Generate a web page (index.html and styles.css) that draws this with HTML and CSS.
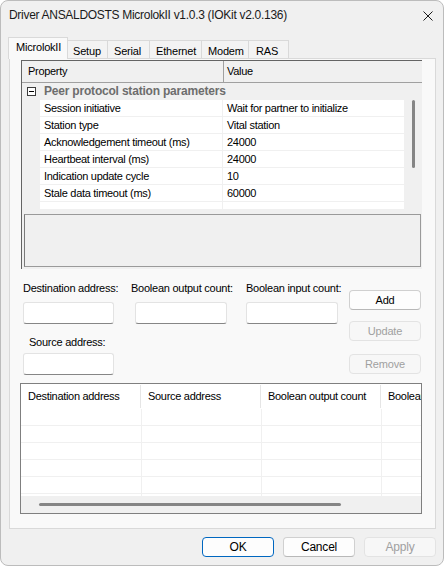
FILE: index.html
```html
<!DOCTYPE html>
<html>
<head>
<meta charset="utf-8">
<link rel="stylesheet" href="styles.css">
</head>
<body>
<div class="window">
  <div class="titlebar">
    <span class="title">Driver ANSALDOSTS MicrolokII v1.0.3 (IOKit v2.0.136)</span>
    <svg class="close" width="10" height="10" viewBox="0 0 10 10"><path d="M0.5 0.5 L9.5 9.5 M9.5 0.5 L0.5 9.5" stroke="#1b1b1b" stroke-width="1" fill="none"/></svg>
  </div>
  <div class="client">
    <div class="tabs">
      <div class="tab active">MicrolokII</div>
      <div class="tab t-setup">Setup</div>
      <div class="tab t-serial">Serial</div>
      <div class="tab t-eth">Ethernet</div>
      <div class="tab t-modem">Modem</div>
      <div class="tab t-ras">RAS</div>
    </div>
    <div class="panel">
      <div class="pg">
        <div class="pg-head">
          <div class="ph-prop">Property</div>
          <div class="ph-val">Value</div>
        </div>
        <div class="pg-body">
          <div class="pg-rows">
            <div class="cat">
              <svg class="minus" width="9" height="9" viewBox="0 0 9 9"><rect x="0.5" y="0.5" width="8" height="8" fill="#fff" stroke="#3c3c3c"/><path d="M2 4.5 H7" stroke="#000" stroke-width="1"/></svg>
              <span>Peer protocol station parameters</span>
            </div>
            <div class="row"><div class="gut"></div><div class="pc">Session initiative</div><div class="vc">Wait for partner to initialize</div></div>
            <div class="row"><div class="gut"></div><div class="pc">Station type</div><div class="vc">Vital station</div></div>
            <div class="row"><div class="gut"></div><div class="pc">Acknowledgement timeout (ms)</div><div class="vc">24000</div></div>
            <div class="row"><div class="gut"></div><div class="pc">Heartbeat interval (ms)</div><div class="vc">24000</div></div>
            <div class="row"><div class="gut"></div><div class="pc">Indication update cycle</div><div class="vc">10</div></div>
            <div class="row"><div class="gut"></div><div class="pc">Stale data timeout (ms)</div><div class="vc">60000</div></div>
            <div class="row"><div class="gut"></div><div class="pc"></div><div class="vc"></div></div>
          </div>
          <div class="vscroll"><div class="vthumb"></div></div>
        </div>
        <div class="desc"></div>
      </div>

      <div class="form">
        <div class="fields">
          <div class="frow labels">
            <div class="lab c1">Destination address:</div>
            <div class="lab c2">Boolean output count:</div>
            <div class="lab c3">Boolean input count:</div>
          </div>
          <div class="frow boxes">
            <div class="cell c1"><div class="tb"></div></div>
            <div class="cell c2"><div class="tb tb2"></div></div>
            <div class="cell c3"><div class="tb"></div></div>
          </div>
          <div class="lab src">Source address:</div>
          <div class="tb srcbox"></div>
        </div>
        <div class="btncol">
          <div class="btn add">Add</div>
          <div class="btn disabled upd">Update</div>
          <div class="btn disabled rem">Remove</div>
        </div>
      </div>

      <div class="lv">
        <div class="lv-head">
          <div class="lh">Destination address</div>
          <div class="lh">Source address</div>
          <div class="lh">Boolean output count</div>
          <div class="lh">Boolean input count</div>
        </div>
        <div class="lv-rows">
          <div class="lr"><div class="lc"></div><div class="lc"></div><div class="lc"></div><div class="lc"></div></div>
          <div class="lr"><div class="lc"></div><div class="lc"></div><div class="lc"></div><div class="lc"></div></div>
          <div class="lr"><div class="lc"></div><div class="lc"></div><div class="lc"></div><div class="lc"></div></div>
          <div class="lr"><div class="lc"></div><div class="lc"></div><div class="lc"></div><div class="lc"></div></div>
          <div class="lr"><div class="lc"></div><div class="lc"></div><div class="lc"></div><div class="lc"></div></div>
          <div class="lr"><div class="lc"></div><div class="lc"></div><div class="lc"></div><div class="lc"></div></div>
        </div>
        <div class="hscroll"><div class="hthumb"></div></div>
      </div>
    </div>

    <div class="footer">
      <div class="btn default">OK</div>
      <div class="btn">Cancel</div>
      <div class="btn disabled">Apply</div>
    </div>
  </div>
</div>
</body>
</html>
```
FILE: styles.css
```css
* { box-sizing: border-box; }
html, body { margin: 0; padding: 0; background: #ffffff; }
body {
  font-family: "Liberation Sans", Arial, sans-serif;
  font-size: 11px;
  color: #000;
}
.window {
  width: 444px;
  height: 566px;
  background: #f0f0f0;
  border: 1px solid #bcbcbc;
  border-radius: 8px;
  overflow: hidden;
}
.titlebar {
  height: 31px;
  display: flex;
  align-items: flex-start;
}
.title {
  font-size: 12px;
  line-height: 16px;
  padding-top: 6px;
  padding-left: 8px;
  letter-spacing: -0.3px;
  color: #1a1a1a;
}
.close {
  margin-left: auto;
  margin-top: 10px;
  margin-right: 10px;
}
.client {
  padding: 5px 7px 0 7px;
}
.tabs {
  display: flex;
  align-items: flex-end;
  height: 21px;
  position: relative;
  z-index: 2;
}
.tab {
  height: 18px;
  line-height: 14px;
  padding: 3px 0 0 6px;
  background: #f3f3f3;
  border-top: 1px solid #d9d9d9;
  border-right: 1px solid #d9d9d9;
  letter-spacing: -0.2px;
  white-space: nowrap;
  flex: none;
}
.t-setup { width: 40px; padding-left: 5px; }
.t-serial { width: 42px; }
.t-eth { width: 52px; }
.t-modem { width: 47px; }
.t-ras { width: 40px; padding-left: 7px; }
.tab.active {
  height: 22px;
  margin-bottom: -1px;
  padding: 2px 6px 0 7px;
  background: #f9f9f9;
  border-left: 1px solid #d9d9d9;
}
.panel {
  height: 471px;
  margin-left: 1px;
  background: #f9f9f9;
  border: 1px solid #d9d9d9;
  padding: 1px 0 0 11px;
}
.pg {
  width: 401px;
  height: 209px;
  border-top: 1px solid #646464;
  border-left: 1px solid #646464;
  background: #f0f0f0;
}
.pg-head {
  display: flex;
  height: 22px;
  border-bottom: 1px solid #a0a0a0;
  line-height: 21px;
  letter-spacing: -0.3px;
}
.ph-prop {
  width: 202px;
  padding-left: 6px;
  border-right: 1px solid #a0a0a0;
}
.ph-val { padding-left: 3px; }
.pg-body {
  display: flex;
  height: 126px;
}
.pg-rows {
  width: 382px;
  overflow: hidden;
}
.vscroll {
  flex: 1;
  background: #f0f0f0;
}
.vthumb {
  width: 3px;
  height: 68px;
  margin: 17px 0 0 8px;
  background: #858585;
  border-radius: 2px;
}
.cat {
  height: 17px;
  display: flex;
  align-items: flex-start;
  background: #f0f0f0;
}
.minus { margin: 4px 0 0 5px; flex: none; }
.cat span {
  margin-left: 8px;
  font-size: 12px;
  font-weight: bold;
  color: #6d6d6d;
  line-height: 16px;
  letter-spacing: -0.2px;
  white-space: nowrap;
}
.row {
  display: flex;
  height: 17px;
  border-bottom: 1px solid #f0f0f0;
  line-height: 16px;
  letter-spacing: -0.3px;
  white-space: nowrap;
}
.gut { width: 18px; background: #f0f0f0; flex: none; }
.pc {
  width: 183px;
  flex: none;
  background: #fff;
  padding-left: 4px;
  border-right: 1px solid #f0f0f0;
}
.vc {
  flex: 1;
  background: #fff;
  padding-left: 4px;
}
.desc {
  margin: 5px 1px 0 2px;
  height: 53px;
  border: 1px solid #9a9a9a;
  border-left-color: #7a7a7a;
  background: #f0f0f0;
}
.form {
  display: flex;
  padding-left: 2px;
  height: 106px;
}
.fields { width: 326px; }
.frow { display: flex; }
.c1 { width: 108px; flex: none; }
.c2 { width: 115px; flex: none; }
.c3 { width: 103px; flex: none; }
.lab {
  line-height: 14px;
  letter-spacing: -0.25px;
  white-space: nowrap;
}
.labels { margin-top: 12px; }
.boxes { margin-top: 7px; }
.tb {
  width: 91px;
  height: 22px;
  background: #fff;
  border: 1px solid #e3e3e3;
  border-bottom-color: #868686;
  border-radius: 3px;
}
.tb2 { margin-left: 4px; width: 92px; }
.c3 .tb { width: 92px; }
.src { margin: 11px 0 0 6px; }
.srcbox { margin-top: 4px; }
.btncol { width: 72px; }
.btn {
  width: 72px;
  height: 20px;
  line-height: 18px;
  text-align: center;
  background: #fdfdfd;
  border: 1px solid #d0d0d0;
  border-bottom-color: #b8b8b8;
  border-radius: 4px;
  letter-spacing: -0.2px;
}
.btn.disabled {
  background: #f7f7f7;
  border-color: #e3e3e3;
  color: #a0a0a0;
}
.btn.default {
  border: 1px solid #0067c0;
}
.add { margin-top: 21px; }
.upd { margin-top: 11px; }
.rem { margin-top: 13px; }
.lv {
  margin: 8px 0 0 -1px;
  width: 402px;
  height: 131px;
  border: 1px solid #7f7f7f;
  background: #fff;
  overflow: hidden;
}
.lv-head {
  display: flex;
  height: 25px;
  padding-top: 1px;
  white-space: nowrap;
  letter-spacing: -0.3px;
}
.lh {
  flex: none;
  width: 120px;
  height: 23px;
  line-height: 23px;
  padding-left: 7px;
  border-right: 1px solid #e5e5e5;
  overflow: hidden;
}
.lv-rows {
  height: 87px;
  overflow: hidden;
}
.lr {
  display: flex;
  height: 17px;
  padding-left: 1px;
  border-bottom: 1px solid #f0f0f0;
}
.lc {
  flex: none;
  width: 120px;
  border-right: 1px solid #f0f0f0;
}
.hscroll {
  height: 17px;
  background: #f0f0f0;
  padding-top: 7px;
}
.hthumb {
  width: 302px;
  height: 3px;
  margin-left: 18px;
  background: #858585;
  border-radius: 2px;
}
.footer {
  display: flex;
  justify-content: flex-end;
  gap: 9px;
  margin-top: 8px;
}
.footer .btn { font-size: 12px; }
```
